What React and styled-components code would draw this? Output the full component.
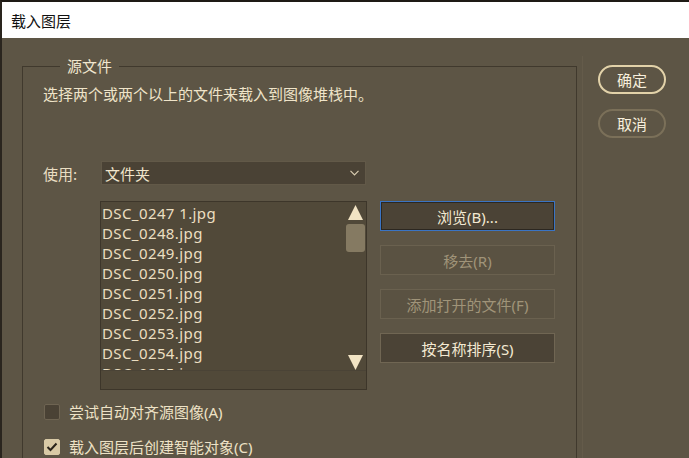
import React from "react";
import styled, { createGlobalStyle } from "styled-components";

const GlobalStyle = createGlobalStyle`
    html, body {
        margin: 0;
        padding: 0;
        background: #5d5545;
    }
    body {
        font-family: "Noto Sans", "Noto Sans CJK SC", sans-serif;
        font-size: 15px;
        overflow: hidden;
    }
`;

const Window = styled.div`
    width: 689px;
    height: 458px;
    box-sizing: border-box;
    border-top: 2px solid #1e1a15;
    border-left: 2px solid #2a251e;
    background: #5d5545;
    display: flex;
    flex-direction: column;
    overflow: hidden;
`;

const TitleBar = styled.div`
    height: 36px;
    background: #ffffff;
    color: #111;
    display: flex;
    align-items: center;
    padding-left: 9px;
    font-size: 15px;
    font-family: "Noto Sans CJK SC", sans-serif;
`;

const Body = styled.div`
    flex: 1;
    display: flex;
    padding: 18px 0 0 20px;
`;

const Group = styled.fieldset`
    width: 555px;
    box-sizing: border-box;
    margin: 0;
    border: 1px solid #40392d;
    border-bottom: none;
    padding: 8px 0 0 20px;
    display: flex;
    flex-direction: column;
`;

const Legend = styled.legend`
    margin-left: 17px;
    padding: 0 7px;
    color: #f1e7cf;
    line-height: 20px;
    font-family: "Noto Sans CJK SC", sans-serif;
`;

const Desc = styled.div`
    color: #efe4c9;
    line-height: 20px;
    font-family: "Noto Sans CJK SC", sans-serif;
`;

const UseRow = styled.div`
    display: flex;
    align-items: center;
    margin-top: 57px;
`;

const Label = styled.div`
    width: 58px;
    color: #e9dec3;
    font-family: "Noto Sans CJK SC", sans-serif;
`;

const Select = styled.div`
    width: 265px;
    height: 24px;
    box-sizing: border-box;
    background: #4a4235;
    border: 1px solid #625948;
    color: #f1e6cc;
    display: flex;
    align-items: center;
    justify-content: space-between;
    padding: 0 6px 0 3px;
    font-family: "Noto Sans CJK SC", sans-serif;
`;

const FilesRow = styled.div`
    display: flex;
    margin-top: 16px;
    padding-left: 57px;
    gap: 13px;
`;

const ListBox = styled.div`
    width: 267px;
    height: 189px;
    box-sizing: border-box;
    background: #514939;
    border: 1px solid #3d362a;
    display: flex;
    flex-direction: column;
`;

const ListMain = styled.div`
    height: 168px;
    display: flex;
`;

const Items = styled.div`
    flex: 1;
    overflow: hidden;
    padding: 1px 0 0 1px;
`;

const Item = styled.div`
    line-height: 20px;
    color: #ecdfc1;
    letter-spacing: 0.4px;
    white-space: nowrap;
`;

const ScrollBar = styled.div`
    width: 21px;
    display: flex;
    flex-direction: column;
    align-items: center;
    padding-top: 3px;
`;

const Thumb = styled.div`
    width: 19px;
    height: 28px;
    margin-top: 3px;
    border-radius: 3px;
    background: #857a62;
`;

const Spacer = styled.div`
    flex: 1;
`;

const HScrollArea = styled.div`
    flex: 1;
    border-top: 1px solid #4a4336;
`;

const ButtonCol = styled.div`
    display: flex;
    flex-direction: column;
    gap: 14px;
`;

const ActionButton = styled.div`
    width: 175px;
    height: 30px;
    box-sizing: border-box;
    display: flex;
    align-items: center;
    justify-content: center;
    background: ${(p) => (p.$disabled ? "#5a5242" : "#4b4336")};
    border: 1px solid ${(p) => (p.$focus ? "#3a74c4" : p.$disabled ? "#6a614f" : "#706653")};
    box-shadow: ${(p) => (p.$focus ? "inset 0 0 0 1px #2c2720" : "none")};
    color: ${(p) => (p.$disabled ? "#a09479" : "#f3e9d2")};
`;

const CheckRow = styled.div`
    display: flex;
    align-items: center;
    gap: 9px;
    line-height: 20px;
    margin-top: ${(p) => p.$top}px;
    color: #ede2c6;
    font-family: "Noto Sans", "Noto Sans CJK SC", sans-serif;
`;

const Box = styled.div`
    width: 16px;
    height: 16px;
    box-sizing: border-box;
    margin-left: 1px;
    border-radius: 2px;
    border: 1px solid ${(p) => (p.$checked ? "#d9caa6" : "#6e6452")};
    background: ${(p) => (p.$checked ? "#d9caa6" : "#4a4235")};
    display: flex;
    align-items: center;
    justify-content: center;
`;

const Side = styled.div`
    display: flex;
    flex-direction: column;
    gap: 15px;
    margin-left: 5px;
    padding: 9px 0 0 15px;
    border-left: 1px solid #645b4a;
`;

const Pill = styled.div`
    width: 68px;
    height: 29px;
    box-sizing: border-box;
    border-radius: 15px;
    border: 2px solid ${(p) => (p.$primary ? "#e2d2a9" : "#7b7059")};
    color: #f7efdc;
    display: flex;
    align-items: center;
    justify-content: center;
    font-family: "Noto Sans CJK SC", sans-serif;
`;

const Tri = ({ down }) => (
    <svg width="15" height="16" viewBox="0 0 15 16">
        <path d={down ? "M0 1 L15 1 L7.5 16 Z" : "M7.5 0 L15 15 L0 15 Z"} fill="#f2e4c4" />
    </svg>
);

const files = [
    "DSC_0247 1.jpg",
    "DSC_0248.jpg",
    "DSC_0249.jpg",
    "DSC_0250.jpg",
    "DSC_0251.jpg",
    "DSC_0252.jpg",
    "DSC_0253.jpg",
    "DSC_0254.jpg",
    "DSC_0255.jpg",
];

export default function App() {
    return (
        <>
            <GlobalStyle />
            <Window>
                <TitleBar>载入图层</TitleBar>
                <Body>
                    <Group>
                        <Legend>源文件</Legend>
                        <Desc>选择两个或两个以上的文件来载入到图像堆栈中。</Desc>
                        <UseRow>
                            <Label>使用:</Label>
                            <Select>
                                <span>文件夹</span>
                                <svg width="9" height="6" viewBox="0 0 9 6">
                                    <path d="M0.5 0.8 L4.5 4.8 L8.5 0.8" stroke="#d8ccb0" strokeWidth="1.2" fill="none" />
                                </svg>
                            </Select>
                        </UseRow>
                        <FilesRow>
                            <ListBox>
                                <ListMain>
                                    <Items>
                                        {files.map((f) => (
                                            <Item key={f}>{f}</Item>
                                        ))}
                                    </Items>
                                    <ScrollBar>
                                        <Tri />
                                        <Thumb />
                                        <Spacer />
                                        <Tri down />
                                    </ScrollBar>
                                </ListMain>
                                <HScrollArea />
                            </ListBox>
                            <ButtonCol>
                                <ActionButton $focus>浏览(B)...</ActionButton>
                                <ActionButton $disabled>移去(R)</ActionButton>
                                <ActionButton $disabled>添加打开的文件(F)</ActionButton>
                                <ActionButton>按名称排序(S)</ActionButton>
                            </ButtonCol>
                        </FilesRow>
                        <CheckRow $top={12}>
                            <Box />
                            尝试自动对齐源图像(A)
                        </CheckRow>
                        <CheckRow $top={15}>
                            <Box $checked>
                                <svg width="12" height="10" viewBox="0 0 12 10">
                                    <path d="M1.5 5 L4.5 8 L10.5 1.5" stroke="#2a241b" strokeWidth="2" fill="none" />
                                </svg>
                            </Box>
                            载入图层后创建智能对象(C)
                        </CheckRow>
                    </Group>
                    <Side>
                        <Pill $primary>确定</Pill>
                        <Pill>取消</Pill>
                    </Side>
                </Body>
            </Window>
        </>
    );
}
